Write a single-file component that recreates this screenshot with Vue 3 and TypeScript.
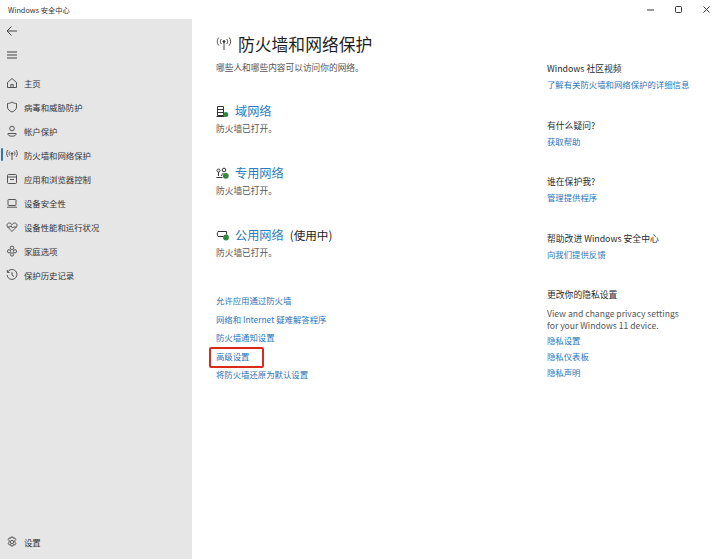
<script setup lang="ts">
const nav = [
  { label: '主页', icon: 'home' },
  { label: '病毒和威胁防护', icon: 'shield' },
  { label: '帐户保护', icon: 'user' },
  { label: '防火墙和网络保护', icon: 'wifi', active: true },
  { label: '应用和浏览器控制', icon: 'app' },
  { label: '设备安全性', icon: 'laptop' },
  { label: '设备性能和运行状况', icon: 'heart' },
  { label: '家庭选项', icon: 'family' },
  { label: '保护历史记录', icon: 'history' },
]
const links = ['允许应用通过防火墙', '网络和 Internet 疑难解答程序', '防火墙通知设置', '高级设置', '将防火墙还原为默认设置']
const side = [
  { title: 'Windows 社区视频', links: ['了解有关防火墙和网络保护的详细信息'] },
  { title: '有什么疑问?', links: ['获取帮助'] },
  { title: '谁在保护我?', links: ['管理提供程序'] },
  { title: '帮助改进 Windows 安全中心', links: ['向我们提供反馈'] },
]
const privacy = ['隐私设置', '隐私仪表板', '隐私声明']
</script>

<template>
  <div class="window">
    <header class="titlebar">
      <span class="app-name">Windows 安全中心</span>
      <div class="controls">
        <svg width="10" height="10" viewBox="0 0 10 10"><path d="M1 5h7" stroke="#333" fill="none" /></svg>
        <svg width="10" height="10" viewBox="0 0 10 10"><rect x="1.5" y="1.5" width="6" height="6" rx="1" stroke="#333" fill="none" /></svg>
        <svg width="10" height="10" viewBox="0 0 10 10"><path d="M1.500 1.500l6 6M7.500 1.500l-6 6" stroke="#333" fill="none" /></svg>
      </div>
    </header>
    <div class="body">
      <aside class="sidebar">
        <div class="tool-icon">
          <svg width="12" height="12" viewBox="0 0 12 12"><path d="M11 6H1.500M5.500 1.500L1 6l4.500 4.500" stroke="#444" fill="none" /></svg>
        </div>
        <div class="tool-icon">
          <svg width="12" height="10" viewBox="0 0 12 10"><path d="M1 2h10M1 5h10M1 8h10" stroke="#444" fill="none" /></svg>
        </div>
        <nav class="nav">
          <div v-for="item in nav" :key="item.label" class="nav-row" :class="{ active: item.active }">
            <svg class="nav-icon" width="12" height="12" viewBox="0 0 12 12" fill="none" stroke="#444" stroke-width="0.9">
              <template v-if="item.icon === 'home'"><path d="M1.500 5.500L6 1.500l4.500 4v5h-9zM4.800 10.500V7.500h2.400v3" /></template>
              <template v-else-if="item.icon === 'shield'"><path d="M6 1c1.500 1.100 3 1.500 4.500 1.500V6c0 2.500-2 4-4.500 5C3.500 10 1.500 8.500 1.500 6V2.500C3 2.500 4.500 2.100 6 1z" /></template>
              <template v-else-if="item.icon === 'user'"><circle cx="6" cy="3.500" r="2.300" /><path d="M2 8.500h8c.5 1.800-1.500 2.700-4 2.700S1.500 10.300 2 8.500z" /></template>
              <template v-else-if="item.icon === 'wifi'"><circle cx="6" cy="4.500" r="0.800" fill="#444" /><path d="M6 5v6M3.800 2.500c-1 1.200-1 2.800 0 4M8.200 2.500c1 1.200 1 2.800 0 4M2 1c-1.700 2-1.700 5 0 7M10 1c1.700 2 1.700 5 0 7" /></template>
              <template v-else-if="item.icon === 'app'"><rect x="1.500" y="1.500" width="9" height="9" rx="1" /><path d="M1.500 4h9M4 6.500h4" /></template>
              <template v-else-if="item.icon === 'laptop'"><rect x="2" y="2.500" width="8" height="6" rx="0.800" /><path d="M1 10.200h10" /></template>
              <template v-else-if="item.icon === 'heart'"><path d="M6 10.500L1.800 6.200C.2 4.500 1.200 2 3.300 2c1.200 0 2.100.7 2.700 1.600C6.600 2.700 7.500 2 8.700 2c2.100 0 3.100 2.500 1.500 4.200zM1.500 6h2.500l1-1.300L6.500 7l1-1h3" /></template>
              <template v-else-if="item.icon === 'family'"><circle cx="6" cy="2.800" r="1.800" /><circle cx="3" cy="6.300" r="1.600" /><circle cx="9" cy="6.300" r="1.600" /><circle cx="6" cy="9.500" r="1.600" /></template>
              <template v-else><path d="M1.500 3.200A5 5 0 1 1 1 6M1.300 1v2.400h2.400M6 3.200V6l2 1.500" /></template>
            </svg>
            <span>{{ item.label }}</span>
          </div>
        </nav>
        <div class="nav-row settings">
          <svg class="nav-icon" width="12" height="12" viewBox="0 0 12 12" fill="none" stroke="#444" stroke-width="0.9"><circle cx="6" cy="6" r="1.700" /><path d="M5 1h2l.4 1.400 1.400-.5 1 1.700-1 1.100.1 1.500 1 1-1 1.700-1.400-.4-.5 1.500H5l-.4-1.500-1.400.4-1-1.700 1-1V4.700l-1-1.100 1-1.700 1.400.5z" /></svg>
          <span>设置</span>
        </div>
      </aside>
      <main class="content">
        <section class="primary">
          <h1 class="page-title">
            <svg width="16" height="16" viewBox="0 0 16 16" fill="none" stroke="#333" stroke-width="0.9"><circle cx="8" cy="5.500" r="1" fill="#333" /><path d="M8 6v8M5.300 3c-1.200 1.600-1.200 3.400 0 5M10.700 3c1.200 1.600 1.200 3.400 0 5M2.800 1.500c-2 2.500-2 5.500 0 8M13.200 1.500c2 2.500 2 5.500 0 8" /></svg>
            防火墙和网络保护
          </h1>
          <p class="muted subtitle">哪些人和哪些内容可以访问你的网络。</p>

          <div class="network domain">
            <div class="net-head">
              <svg class="net-icon" width="14" height="14" viewBox="0 0 14 14" fill="none" stroke="#333">
                <path d="M1.500 2.500h6v9h-6zM1.500 5.500h6M1.500 8.500h6M0.500 12.500h8" />
                <circle cx="9.800" cy="10.500" r="2.500" fill="#2e8b3d" stroke="none" />
              </svg>
              <a>域网络</a>
            </div>
            <p class="muted">防火墙已打开。</p>
          </div>
          <div class="network">
            <div class="net-head">
              <svg class="net-icon" width="14" height="14" viewBox="0 0 14 14" fill="none" stroke="#333">
                <circle cx="2.500" cy="4.500" r="1.500" /><circle cx="8" cy="4" r="1.800" /><path d="M2.500 6v4M0.500 11.500h6M5.500 10c0-1.500 1-2.500 2-2.500" />
                <circle cx="9.800" cy="9.800" r="2.900" fill="#2e8b3d" stroke="none" />
              </svg>
              <a>专用网络</a>
            </div>
            <p class="muted">防火墙已打开。</p>
          </div>
          <div class="network">
            <div class="net-head">
              <svg class="net-icon" width="14" height="14" viewBox="0 0 14 14" fill="none" stroke="#333">
                <path d="M2 3.500h8.500v3M2 3.500C1 5 1 7 2 8.500h5.500" />
                <circle cx="10" cy="9.500" r="2.900" fill="#2e8b3d" stroke="none" />
              </svg>
              <a>公用网络</a>
              <span class="in-use">(使用中)</span>
            </div>
            <p class="muted">防火墙已打开。</p>
          </div>

          <div class="links">
            <a v-for="l in links" :key="l" class="link" :class="{ marked: l === '高级设置' }">{{ l }}</a>
          </div>
        </section>

        <section class="aside">
          <div v-for="g in side" :key="g.title" class="group">
            <h2>{{ g.title }}</h2>
            <a v-for="l in g.links" :key="l" class="link">{{ l }}</a>
          </div>
          <div class="group">
            <h2>更改你的隐私设置</h2>
            <p class="muted desc">View and change privacy settings<br />for your Windows 11 device.</p>
            <a v-for="l in privacy" :key="l" class="link compact">{{ l }}</a>
          </div>
        </section>
      </main>
    </div>
  </div>
</template>

<style scoped>
.window {
  width: 720px;
  height: 559px;
  display: flex;
  flex-direction: column;
  background: #fff;
  overflow: hidden;
  font-family: "Noto Sans CJK SC", "Noto Sans", sans-serif;
  font-size: 8.4px;
  color: #222;
}
.titlebar {
  height: 19px;
  flex: none;
  display: flex;
  align-items: center;
  justify-content: space-between;
  padding: 0 8px 0 8px;
}
.app-name { font-size: 7.3px; color: #333; }
.controls { display: flex; gap: 18px; }
.body { flex: 1; display: flex; min-height: 0; }
.sidebar {
  width: 192px;
  flex: none;
  background: #e6e6e6;
  display: flex;
  flex-direction: column;
}
.tool-icon { height: 24px; padding-left: 6px; display: flex; align-items: center; }
.nav { margin-top: 4.4px; display: flex; flex-direction: column; }
.nav-row {
  height: 24px;
  display: flex;
  align-items: center;
  padding-left: 6px;
  gap: 6px;
  color: #333;
  position: relative;
  flex: none;
}
.nav-icon { flex: none; }
.nav-row.active::before {
  content: "";
  position: absolute;
  left: 1px;
  top: 5px;
  width: 2px;
  height: 13px;
  background: #2f76b5;
  border-radius: 1px;
}
.settings { margin-top: auto; margin-bottom: 5px; }
.content { flex: 1; display: flex; min-width: 0; }
.primary { width: 331px; flex: none; padding: 14px 0 0 24px; box-sizing: content-box; }
.page-title {
  margin: 0;
  height: 22px;
  display: flex;
  align-items: center;
  gap: 6px;
  font-size: 16.8px;
  font-weight: 400;
  color: #1f1f1f;
  line-height: 22px;
}
.muted { margin: 0; color: #555; }
.subtitle { margin-top: 6px; line-height: 14px; font-size: 8.7px; }
.network { margin-top: 27px; }
.network.domain { margin-top: 26px; }
.net-head {
  height: 20px;
  display: flex;
  align-items: center;
  gap: 5px;
  font-size: 12.2px;
}
.net-icon { flex: none; }
.net-head a { color: #2b7cc0; }
.in-use { margin-left: 1px; color: #222; font-size: 11.6px; }
.network .muted { line-height: 14px; margin-top: 1px; font-size: 8.7px; }
.links { margin-top: 31px; display: flex; flex-direction: column; align-items: flex-start; }
.link {
  display: block;
  color: #1f76bd;
  line-height: 18.6px;
  white-space: nowrap;
}
.marked { position: relative; }
.marked::after {
  content: "";
  position: absolute;
  left: -7px;
  right: -14px;
  top: 0;
  bottom: -3px;
  border: 2px solid #d92a1c;
  border-radius: 2px;
}
.aside { flex: 1; padding: 42px 0 0 0; }
.group { margin-bottom: 25.5px; }
.group h2 {
  margin: 0;
  font-size: 8.8px;
  font-weight: 400;
  color: #2a2a2a;
  line-height: 16px;
}
.group .link { line-height: 16px; }
.group h2 + .link { margin-top: -1px; }
.desc { line-height: 12px; margin: 4px 0 1px; font-size: 8.6px; }
.group .compact { line-height: 16px; }
</style>

<style>
html, body { margin: 0; background: #fff; }
</style>
